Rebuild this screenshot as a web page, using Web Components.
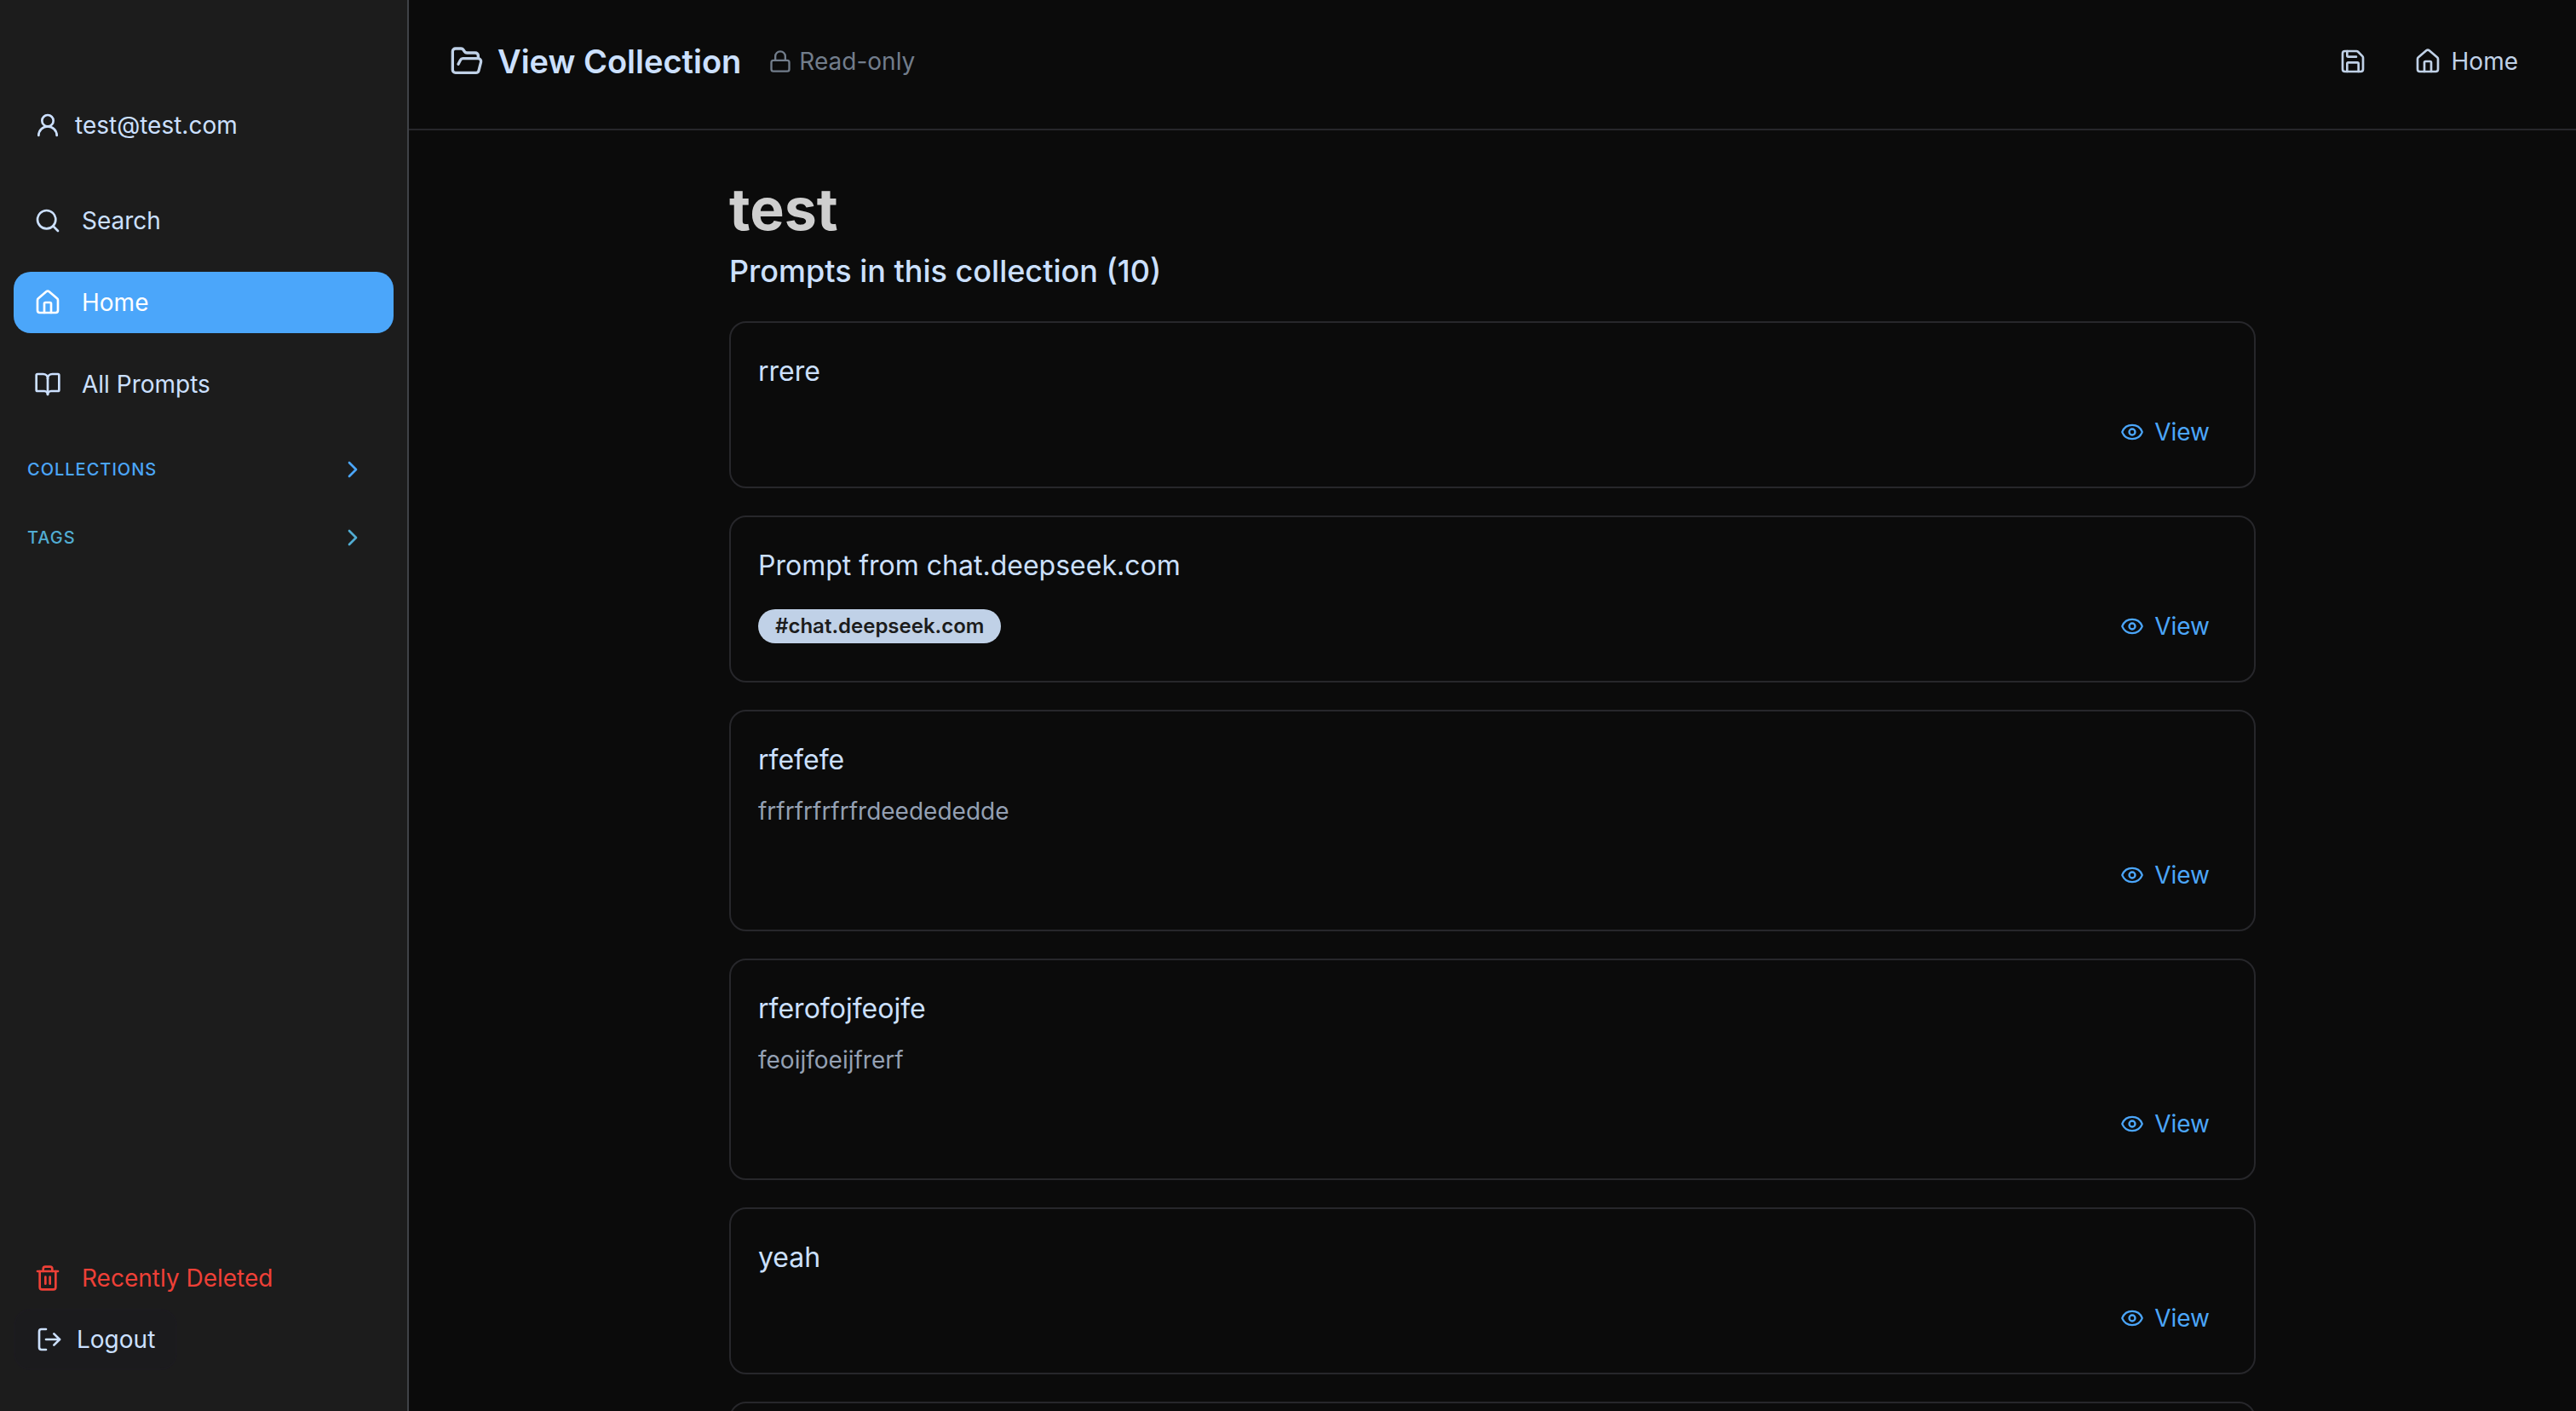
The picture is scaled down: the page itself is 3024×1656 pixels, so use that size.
<!DOCTYPE html>
<html lang="en">
<head>
<meta charset="utf-8">
<title>View Collection</title>
<style>
  html, body { margin: 0; height: 100%; }
  body {
    --bg: #0b0b0b;
    --panel: #1c1c1c;
    --line: #27272b;
    --ink: #cce0ff;
    --soft: #c0d1e7;
    --muted: #94a0b3;
    --dim: #727d8b;
    --accent: #4ba6fa;
    --teal: #51acd2;
    --danger: #ee4037;
    background: var(--bg);
    color: var(--ink);
    font-family: Inter, "Liberation Sans", sans-serif;
    font-size: 28px;
    line-height: 42px;
    overflow: hidden;
  }
</style>
</head>
<body>
<app-shell>
  <side-bar slot="sidebar">
    <user-badge slot="user">test@test.com</user-badge>
    <nav-item icon="search">Search</nav-item>
    <nav-item icon="house" active>Home</nav-item>
    <nav-item icon="book">All Prompts</nav-item>
    <nav-group slot="groups" tone="accent">Collections</nav-group>
    <nav-group slot="groups" tone="teal">Tags</nav-group>
    <nav-item slot="footer" icon="trash" danger>Recently Deleted</nav-item>
    <logout-button slot="footer">Logout</logout-button>
  </side-bar>
  <top-bar slot="header">View Collection</top-bar>
  <collection-view name="test" count="10">
    <prompt-card name="rrere"></prompt-card>
    <prompt-card name="Prompt from chat.deepseek.com"><prompt-tag>#chat.deepseek.com</prompt-tag></prompt-card>
    <prompt-card name="rfefefe" text="frfrfrfrfrfrdeedededde"></prompt-card>
    <prompt-card name="rferofojfeojfe" text="feoijfoeijfrerf"></prompt-card>
    <prompt-card name="yeah"></prompt-card>
    <prompt-card></prompt-card>
  </collection-view>
</app-shell>

<script>
const ICONS = {
  user: '<circle cx="12" cy="8" r="5"/><path d="M20 21a8 8 0 0 0-16 0"/>',
  search: '<circle cx="11" cy="11" r="8"/><path d="m21 21-4.3-4.3"/>',
  house: '<path d="M15 21v-8a1 1 0 0 0-1-1h-4a1 1 0 0 0-1 1v8"/><path d="M3 10a2 2 0 0 1 .709-1.528l7-5.999a2 2 0 0 1 2.582 0l7 5.999A2 2 0 0 1 21 10v9a2 2 0 0 1-2 2H5a2 2 0 0 1-2-2z"/>',
  book: '<path d="M12 7v14"/><path d="M3 18a1 1 0 0 1-1-1V4a1 1 0 0 1 1-1h5a4 4 0 0 1 4 4 4 4 0 0 1 4-4h5a1 1 0 0 1 1 1v13a1 1 0 0 1-1 1h-6a3 3 0 0 0-3 3 3 3 0 0 0-3-3z"/>',
  chevron: '<path d="m9 18 6-6-6-6"/>',
  trash: '<path d="M3 6h18"/><path d="M19 6v14a2 2 0 0 1-2 2H7a2 2 0 0 1-2-2V6"/><path d="M8 6V4a2 2 0 0 1 2-2h4a2 2 0 0 1 2 2v2"/><path d="M10 11v6"/><path d="M14 11v6"/>',
  logout: '<path d="M9 21H5a2 2 0 0 1-2-2V5a2 2 0 0 1 2-2h4"/><path d="m16 17 5-5-5-5"/><path d="M21 12H9"/>',
  folder: '<path d="m6 14 1.5-2.9A2 2 0 0 1 9.24 10H20a2 2 0 0 1 1.94 2.5l-1.54 6a2 2 0 0 1-1.95 1.5H4a2 2 0 0 1-2-2V5a2 2 0 0 1 2-2h3.9a2 2 0 0 1 1.69.9l.81 1.2a2 2 0 0 0 1.67.9H18a2 2 0 0 1 2 2v2"/>',
  lock: '<rect x="3" y="11" width="18" height="11" rx="2"/><path d="M7 11V7a5 5 0 0 1 10 0v4"/>',
  save: '<path d="M15.2 3a2 2 0 0 1 1.4.6l3.8 3.8a2 2 0 0 1 .6 1.4V19a2 2 0 0 1-2 2H5a2 2 0 0 1-2-2V5a2 2 0 0 1 2-2z"/><path d="M17 21v-7a1 1 0 0 0-1-1H8a1 1 0 0 0-1 1v7"/><path d="M7 3v4a1 1 0 0 0 1 1h7"/>',
  eye: '<path d="M2.062 12.348a1 1 0 0 1 0-.696 10.75 10.75 0 0 1 19.876 0 1 1 0 0 1 0 .696 10.75 10.75 0 0 1-19.876 0"/><circle cx="12" cy="12" r="3"/>'
};

class BaseElement extends HTMLElement {
  connectedCallback() {
    if (this.shadowRoot) return;
    this.attachShadow({ mode: 'open' }).innerHTML =
      `<style>*{box-sizing:border-box}a{color:inherit;text-decoration:none}
       button{font:inherit;color:inherit;background:none;border:0;margin:0;padding:0;cursor:pointer}
       h1,h2,h3,p{margin:0}${this.styles()}</style>${this.markup()}`;
  }
}
const define = (name, styles, markup) => customElements.define(name, class extends BaseElement {
  styles() { return styles; }
  markup() { return markup(this); }
});

define('ui-icon', `
  :host { display: block; flex: none; width: var(--icon-size, 32px); height: var(--icon-size, 32px); }
  svg { display: block; width: 100%; height: 100%; fill: none; stroke: currentColor;
        stroke-width: 2; stroke-linecap: round; stroke-linejoin: round; }`,
  el => `<svg viewBox="0 0 24 24" aria-hidden="true">${ICONS[el.getAttribute('name')]}</svg>`);

define('app-shell', `
  :host { display: flex; height: 100vh; }
  .page { flex: 1; min-width: 0; display: flex; flex-direction: column; }
  main { flex: 1; min-height: 0; overflow: auto; scrollbar-width: none; }`,
  () => `<slot name="sidebar"></slot><div class="page"><slot name="header"></slot><main><slot></slot></main></div>`);

define('side-bar', `
  :host { box-sizing: border-box; display: flex; flex-direction: column; flex: none; width: 480px;
          padding: 111px 16px 48px; background: var(--panel); border-right: 2px solid #3f4247; }
  nav { display: flex; flex-direction: column; gap: 24px; margin: 40px 0 24px; }
  .groups { display: flex; flex-direction: column; }
  .footer { margin-top: auto; display: flex; flex-direction: column; align-items: stretch; }`,
  () => `<slot name="user"></slot><nav><slot></slot></nav>
    <div class="groups"><slot name="groups"></slot></div>
    <div class="footer"><slot name="footer"></slot></div>`);

define('user-badge', `
  :host { display: flex; align-items: center; gap: 16px; height: 72px; padding: 0 24px; }`,
  () => `<ui-icon name="user"></ui-icon><span><slot></slot></span>`);

define('nav-item', `
  :host { display: block; }
  a { display: flex; align-items: center; gap: 24px; height: 72px; padding: 0 24px; border-radius: 20px; }
  :host([active]) a { background: var(--accent); color: #fff; }
  :host([danger]) a { color: var(--danger); }`,
  el => `<a href="#"><ui-icon name="${el.getAttribute('icon')}"></ui-icon><span><slot></slot></span></a>`);

define('nav-group', `
  :host { display: block; font-size: 20px; font-weight: 500; line-height: 32px; color: var(--accent); }
  :host([tone=teal]) { color: var(--teal); }
  button { display: flex; align-items: center; justify-content: space-between; width: 100%; height: 80px;
           padding: 0 32px 0 16px; text-transform: uppercase; letter-spacing: 0.05em; }`,
  () => `<button type="button"><span><slot></slot></span><ui-icon name="chevron"></ui-icon></button>`);

define('logout-button', `
  :host { display: flex; }
  button { display: flex; align-items: center; gap: 16px; height: 72px; padding: 0 24px;
           border: 2px solid #1c1b1f; border-radius: 20px; background: #1b1b1d; }`,
  () => `<button type="button"><ui-icon name="logout"></ui-icon><span><slot></slot></span></button>`);

define('top-bar', `
  :host { box-sizing: border-box; display: flex; align-items: center; justify-content: space-between;
          padding: 32px 48px 39px; border-bottom: 2px solid var(--line); }
  .title, .status, .actions { display: flex; align-items: center; }
  .title { gap: 16px; color: var(--soft); --icon-size: 40px; }
  h1 { font-size: 38px; line-height: 56px; font-weight: 600; color: var(--ink); }
  .status { gap: 8px; margin-left: 16px; color: var(--dim); --icon-size: 28px; }
  .actions { gap: 16px; color: var(--soft); }
  .actions > * { display: flex; align-items: center; gap: 12px; height: 80px; padding: 0 20px; }`,
  () => `<div class="title"><ui-icon name="folder"></ui-icon><h1><slot></slot></h1>
      <div class="status"><ui-icon name="lock"></ui-icon><span>Read-only</span></div></div>
    <div class="actions"><button type="button" aria-label="Save"><ui-icon name="save"></ui-icon></button>
      <a href="#"><ui-icon name="house"></ui-icon><span>Home</span></a></div>`);

define('collection-view', `
  :host { display: block; box-sizing: border-box; max-width: 1792px; margin: 0 auto; padding-top: 48px; }
  h1 { font-size: 68px; line-height: 88px; font-weight: 700; color: #cfcfcf; }
  h2 { font-size: 36px; line-height: 58px; font-weight: 500; }
  .list { display: flex; flex-direction: column; gap: 32px; margin-top: 30px; }`,
  el => `<h1>${el.getAttribute('name')}</h1>
    <h2>Prompts in this collection (${el.getAttribute('count')})</h2>
    <div class="list"><slot></slot></div>`);

define('prompt-card', `
  :host { display: block; box-sizing: border-box; padding: 32px; border: 2px solid var(--line); border-radius: 20px; }
  h3 { margin-bottom: 14px; font-size: 32px; line-height: 50px; font-weight: 400; }
  p { margin-bottom: 22px; color: var(--muted); }
  .row { display: flex; align-items: center; justify-content: space-between; }
  .tags { display: flex; gap: 8px; }
  a { display: flex; align-items: center; gap: 12px; height: 64px; padding: 0 20px;
      color: var(--accent); --icon-size: 28px; }`,
  el => {
    const name = el.getAttribute('name');
    const text = el.getAttribute('text');
    if (!name) return '';
    return `<h3>${name}</h3>${text ? `<p>${text}</p>` : ''}
      <div class="row"><div class="tags"><slot></slot></div>
      <a href="#"><ui-icon name="eye"></ui-icon><span>View</span></a></div>`;
  });

define('prompt-tag', `
  :host { display: block; padding: 0 20px; border-radius: 20px; background: var(--soft); color: #1c1c1c;
          font-size: 24px; line-height: 40px; font-weight: 600; }`,
  () => `<slot></slot>`);
</script>
</body>
</html>
